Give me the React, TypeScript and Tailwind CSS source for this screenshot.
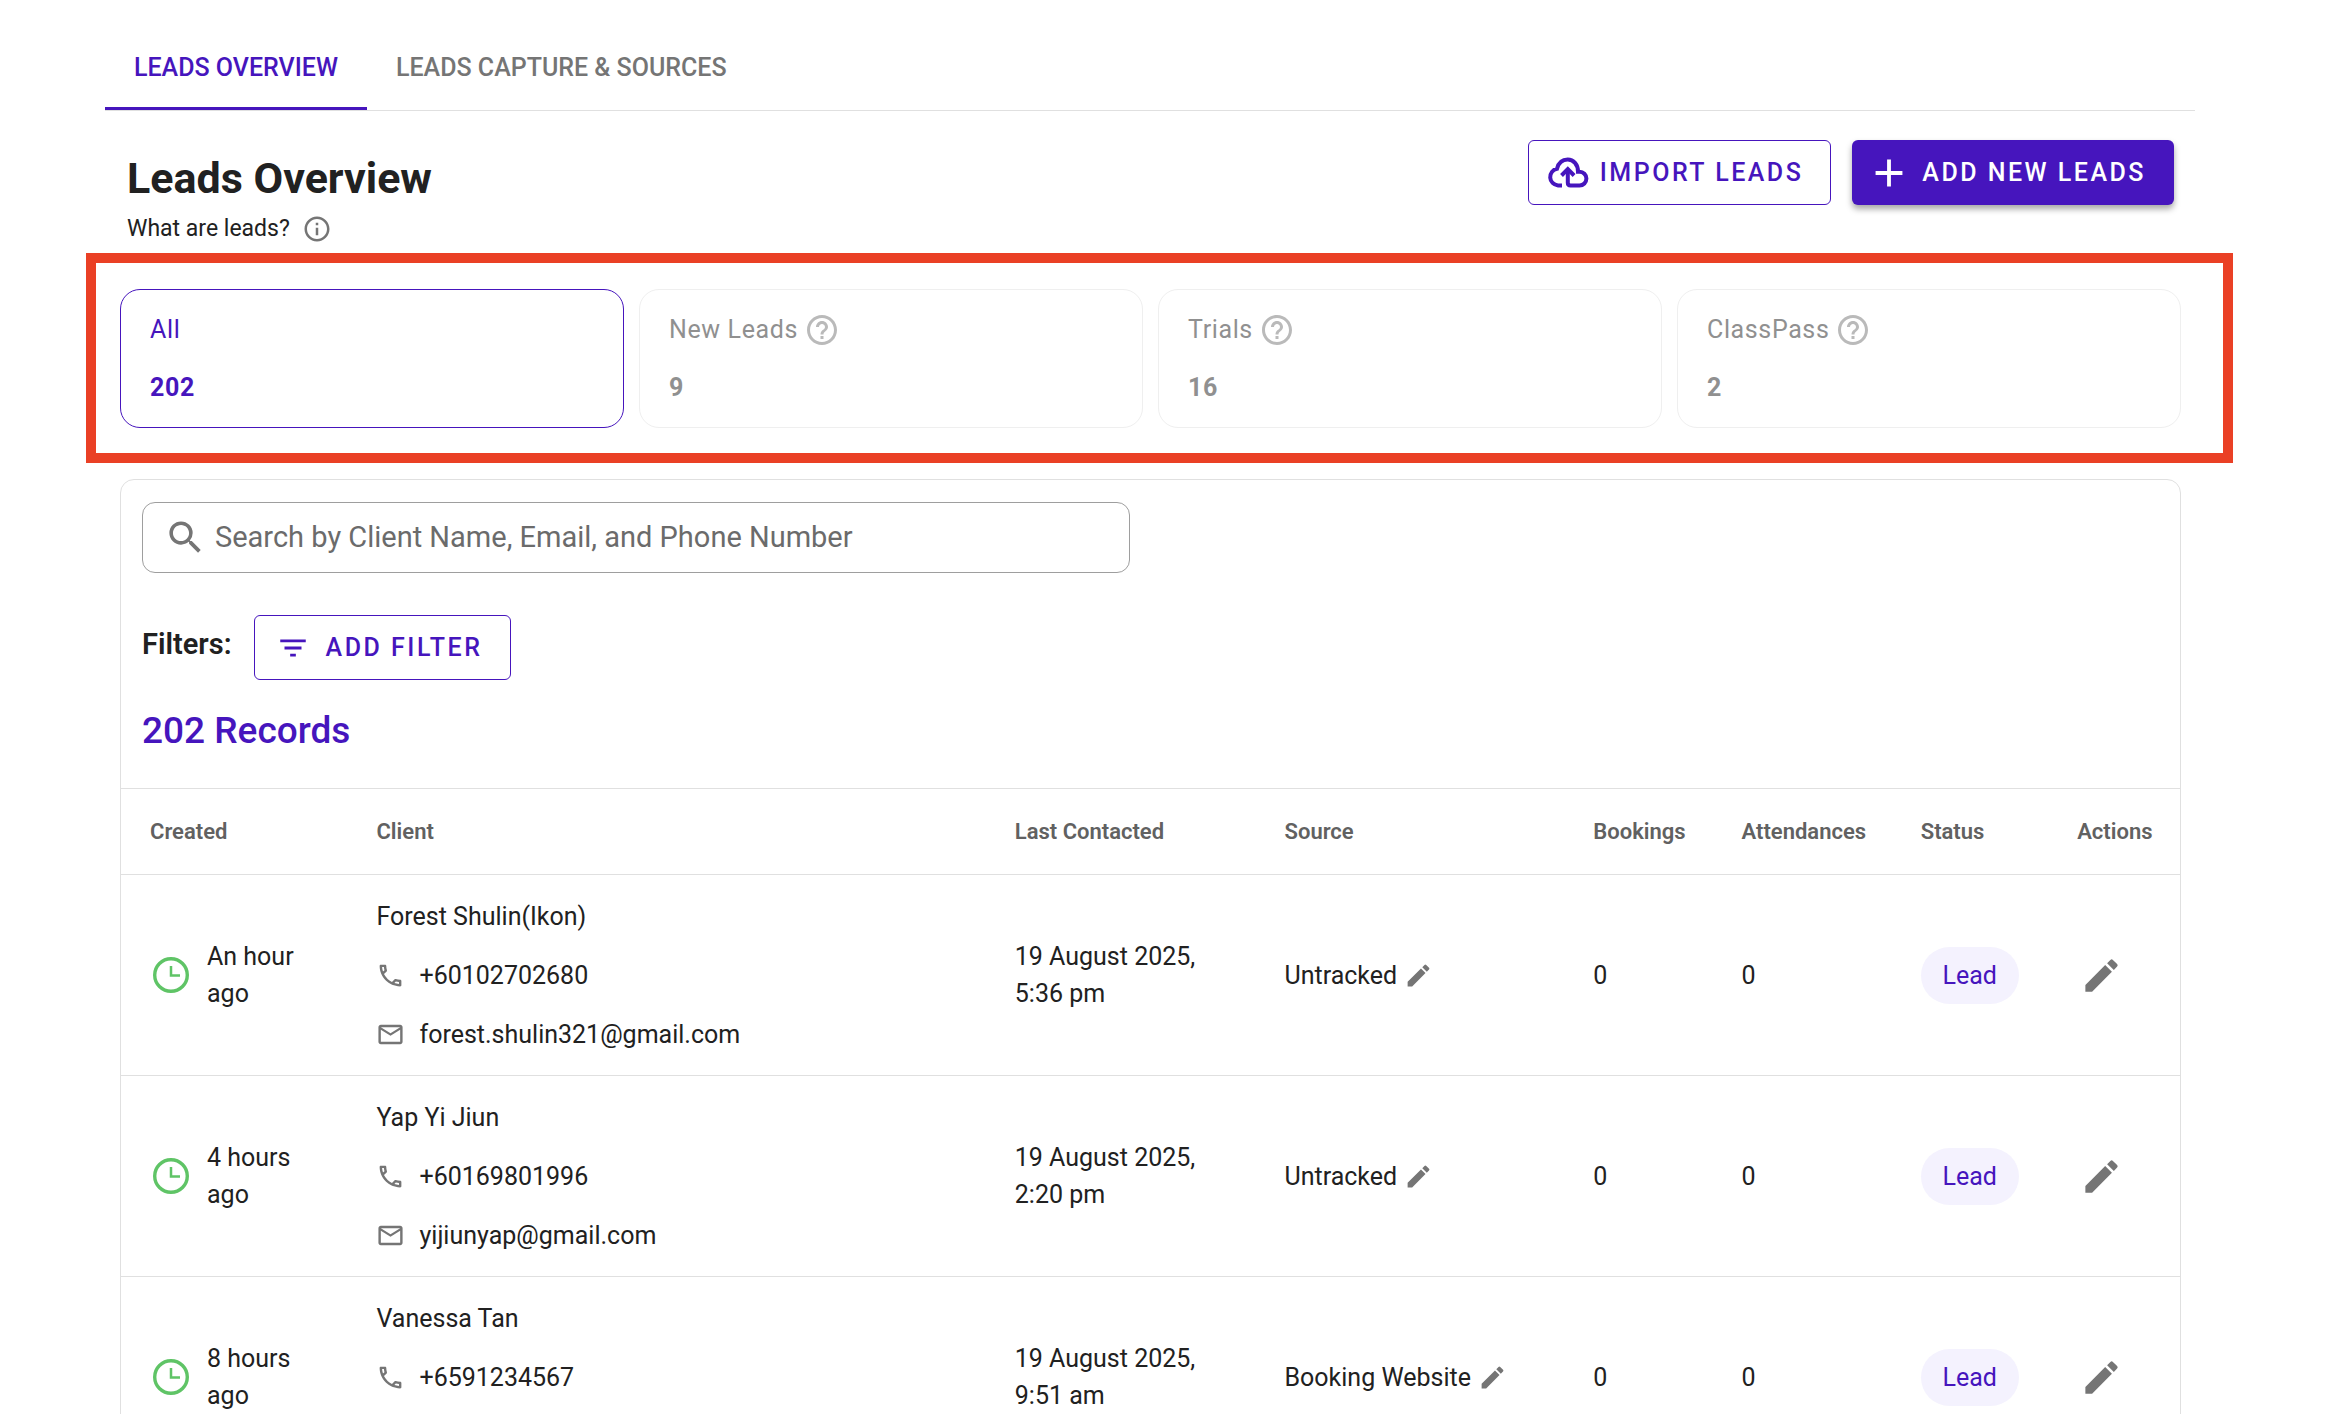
import React from "react";
import {
  MdInfoOutline,
  MdHelpOutline,
  MdSearch,
  MdFilterList,
  MdEdit,
  MdOutlinePhone,
  MdMailOutline,
  MdAdd,
} from "react-icons/md";

type Stat = { label: string; value: string; active?: boolean };
type Lead = {
  created: string;
  name: string;
  phone: string;
  email?: string;
  date: string;
  time: string;
  source: string;
};

const stats: Stat[] = [
  { label: "All", value: "202", active: true },
  { label: "New Leads", value: "9" },
  { label: "Trials", value: "16" },
  { label: "ClassPass", value: "2" },
];

const leads: Lead[] = [
  {
    created: "An hour ago",
    name: "Forest Shulin(Ikon)",
    phone: "+60102702680",
    email: "forest.shulin321@gmail.com",
    date: "19 August 2025,",
    time: "5:36 pm",
    source: "Untracked",
  },
  {
    created: "4 hours ago",
    name: "Yap Yi Jiun",
    phone: "+60169801996",
    email: "yijiunyap@gmail.com",
    date: "19 August 2025,",
    time: "2:20 pm",
    source: "Untracked",
  },
  {
    created: "8 hours ago",
    name: "Vanessa Tan",
    phone: "+6591234567",
    date: "19 August 2025,",
    time: "9:51 am",
    source: "Booking Website",
  },
];

const columns = [
  { title: "Created", width: "w-[11%]" },
  { title: "Client", width: "w-[31%]" },
  { title: "Last Contacted", width: "w-[13.1%]" },
  { title: "Source", width: "w-[15%]" },
  { title: "Bookings", width: "w-[7.2%]" },
  { title: "Attendances", width: "w-[8.7%]" },
  { title: "Status", width: "w-[7.6%]" },
  { title: "Actions", width: "w-[6.4%]" },
];

function CloudUpload() {
  return (
    <svg viewBox="0 0 42 32" className="h-8 w-[42px]" fill="none" stroke="currentColor" strokeWidth="4" aria-hidden="true">
      <path d="M15 28.500H11A8.500 8.500 0 0 1 10 11.700C11.500 6 15.500 2.500 20.700 2.500C26.500 2.500 31 7.500 31 14.700H32.500A6.900 6.900 0 0 1 32.500 28.500H23.500Q20.800 28.500 20.800 25.800V12" />
      <path d="M14.500 18.500L20.800 12.200L27.100 18.500" />
    </svg>
  );
}

function Clock() {
  return (
    <svg viewBox="0 0 36 36" className="size-9 shrink-0 text-[#5fc466]" fill="none" stroke="currentColor" strokeWidth="3.400" aria-hidden="true">
      <circle cx="18" cy="18" r="16.300" />
      <path d="M18 9V18.500H27" strokeWidth="2.500" />
    </svg>
  );
}

export default function App() {
  return (
    <div className="h-screen overflow-hidden bg-white pl-[86px] pr-[105px] font-[Roboto,sans-serif] text-[#212121]">
      <nav className="ml-[19px] mr-[38px] flex h-[111px] items-stretch border-b border-[#e0e0e0] text-[25px] font-medium">
        <button className="border-b-[3px] border-[#4615bd] px-[29px] pt-[29px] text-[#4615bd]">LEADS OVERVIEW</button>
        <button className="border-b-[3px] border-transparent px-[29px] pt-[29px] text-[#757575]">LEADS CAPTURE &amp; SOURCES</button>
      </nav>

      <main>
        <header className="ml-[41px] mr-[59px] flex h-[142px] items-start justify-between pt-[29px]">
          <div className="pt-3">
            <h1 className="text-[43px] leading-[52px] font-bold">Leads Overview</h1>
            <p className="flex h-[50px] items-center gap-3 text-[23px]">
              What are leads?
              <button aria-label="About leads"><MdInfoOutline className="size-[30px] text-[#757575]" /></button>
            </p>
          </div>
          <div className="flex gap-[21px] text-[25px] font-medium tracking-widest">
            <button className="flex h-[65px] items-center gap-[11px] rounded-md border border-[#4615bd] pl-[18px] pr-[27px] text-[#4615bd]">
              <CloudUpload />
              IMPORT LEADS
            </button>
            <button className="flex h-[65px] items-center gap-[10px] rounded-md bg-[#4615bd] pl-[14px] pr-[28px] text-white shadow-[0_4px_6px_rgba(0,0,0,0.35)]">
              <MdAdd className="size-[46px]" />
              ADD NEW LEADS
            </button>
          </div>
        </header>

        <section className="grid grid-cols-4 gap-[15px] border-[10px] border-[#ea4025] pt-[26px] pr-[42px] pb-[25px] pl-6" aria-label="Lead segments">
          {stats.map((s) => (
            <button
              key={s.label}
              className={
                s.active
                  ? "flex h-[139px] flex-col gap-[22px] rounded-[20px] border border-[#4615bd] pl-[29px] pt-[22px] text-left text-[25px] text-[#4615bd]"
                  : "flex h-[139px] flex-col gap-[22px] rounded-[20px] border border-[#efefef] pl-[29px] pt-[22px] text-left text-[25px] text-[#909090]"
              }
            >
              <span className="flex h-9 items-center gap-[6px] tracking-wide">
                {s.label}
                {!s.active && <MdHelpOutline className="size-9 text-[#bababa]" />}
              </span>
              <span className="leading-9 font-bold tracking-wide">{s.value}</span>
            </button>
          ))}
        </section>

        <section className="ml-[34px] mr-[52px] mt-4 rounded-t-[14px] border border-[#e0e0e0]">
          <div className="pl-[21px] pt-[22px]">
            <label className="flex h-[71px] w-[48.5%] items-center gap-2 rounded-[13px] border border-[#9e9e9e] pl-[21px]">
              <MdSearch className="size-[43px] text-[#757575]" />
              <input
                type="text"
                aria-label="Search by client name, email, and phone number"
                placeholder="Search by Client Name, Email, and Phone Number"
                className="flex-1 bg-transparent text-[29px] text-[#212121] outline-none placeholder:text-[#6b6b6b]"
              />
            </label>
            <div className="mt-[42px] flex items-start gap-[22px]">
              <span className="pt-[11px] text-[29px] leading-9 font-semibold">Filters:</span>
              <button className="flex h-[65px] items-center gap-4 rounded-md border border-[#4615bd] pl-[21px] pr-[28px] text-[25px] font-medium tracking-widest text-[#4615bd]">
                <MdFilterList className="size-[34px]" />
                ADD FILTER
              </button>
            </div>
            <h2 className="mt-[26px] pb-8 text-[37px] leading-[50px] font-medium text-[#4615bd]">202 Records</h2>
          </div>

          <table className="w-full table-fixed border-collapse text-left text-[25px] leading-[37px]">
            <thead>
              <tr className="h-[86px] border-y border-[#e0e0e0] text-[22px] text-[#616161]">
                {columns.map((c) => (
                  <th key={c.title} className={`${c.width} pl-[29px] font-semibold whitespace-nowrap`}>{c.title}</th>
                ))}
              </tr>
            </thead>
            <tbody>
              {leads.map((l) => (
                <tr key={l.name} className="h-[201px] border-b border-[#e0e0e0]">
                  <td className="pl-8">
                    <div className="flex items-center gap-[18px] pr-[50px]">
                      <Clock />
                      {l.created}
                    </div>
                  </td>
                  <td className="pl-[29px]">
                    <div className="flex flex-col gap-[22px]">
                      <span>{l.name}</span>
                      <span className="flex items-center gap-[14px]">
                        <MdOutlinePhone className="size-[29px] text-[#757575]" />
                        {l.phone}
                      </span>
                      <span className="flex h-[37px] items-center gap-[14px]">
                        <MdMailOutline className="size-[29px] text-[#757575]" />
                        {l.email}
                      </span>
                    </div>
                  </td>
                  <td className="pl-[29px]">
                    {l.date}
                    <br />
                    {l.time}
                  </td>
                  <td className="pl-[29px]">
                    <span className="flex items-center gap-[7px]">
                      {l.source}
                      <button aria-label="Edit source"><MdEdit className="size-[29px] text-[#757575]" /></button>
                    </span>
                  </td>
                  <td className="pl-[29px]">0</td>
                  <td className="pl-[29px]">0</td>
                  <td className="pl-[29px]">
                    <span className="flex h-[57px] w-[98px] items-center justify-center rounded-full bg-[#f4f2fe] text-[#4615bd]">Lead</span>
                  </td>
                  <td className="pl-8">
                    <button aria-label="Edit lead" className="block"><MdEdit className="size-[43px] text-[#757575]" /></button>
                  </td>
                </tr>
              ))}
            </tbody>
          </table>
        </section>
      </main>
    </div>
  );
}
